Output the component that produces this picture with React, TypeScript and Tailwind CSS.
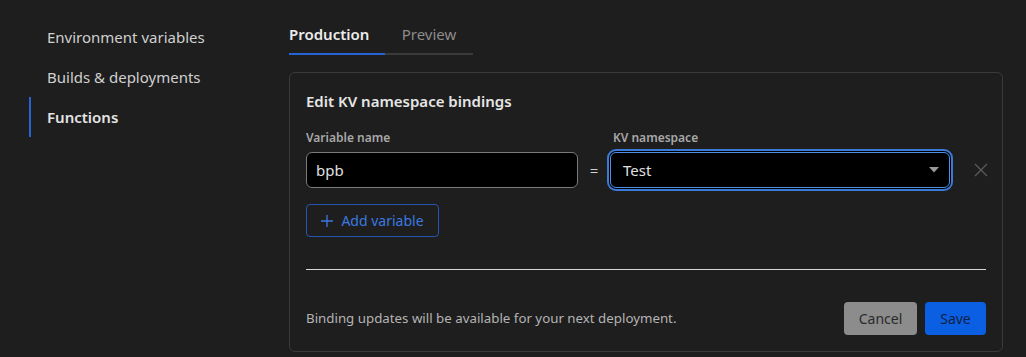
import React from 'react';

const navItems = [
  { label: 'Environment variables', active: false },
  { label: 'Builds & deployments', active: false },
  { label: 'Functions', active: true },
];

const App = () => {
  return (
    <div
      className="flex min-h-[357px] w-full bg-[#1e1e1e] text-[#d4d4d4]"
      style={{ fontFamily: '"Noto Sans", "Open Sans", sans-serif' }}
    >
      {/* Sidebar */}
      <nav className="w-[289px] shrink-0 pl-[29px] pt-[17px]">
        {navItems.map((item) => (
          <div
            key={item.label}
            className={`flex h-10 items-center border-l-2 pl-4 text-[15px] ${
              item.active ? 'border-[#2563d6] font-semibold text-[#e4e4e4]' : 'border-transparent text-[#d0d0d0]'
            }`}
          >
            {item.label}
          </div>
        ))}
      </nav>

      {/* Main */}
      <main className="w-[714px] shrink-0 pt-[22px]">
        <div className="flex">
          <button className="w-[96px] border-b-2 border-[#2563d6] pb-[7px] text-left text-[15px] leading-6 font-semibold text-[#ececec]">
            Production
          </button>
          <button className="w-[88px] border-b-2 border-[#3a3a3a] pb-[7px] text-center text-[15px] leading-6 text-[#8c8c8c]">
            Preview
          </button>
        </div>

        <section className="mt-[17px] rounded-md border border-[#3a3a3a] px-4 pt-4 pb-4">
          <h2 className="text-[15px] leading-6 font-semibold text-[#e6e6e6]">Edit KV namespace bindings</h2>

          <div className="mt-[17px] flex items-end">
            <div className="w-[272px] shrink-0">
              <div className="mb-1.5 text-[12px] leading-4 font-semibold text-[#a8a8a8]">Variable name</div>
              <input
                readOnly
                value="bpb"
                className="h-9 w-full rounded-md border border-[#7a7a7a] bg-black px-[9px] text-[15px] text-[#e0e0e0] outline-none"
              />
            </div>
            <div className="flex h-9 w-8 shrink-0 items-center justify-center text-[15px] text-[#cfcfcf]">=</div>
            <div className="w-[340px] shrink-0">
              <div className="mb-1.5 pl-[3px] text-[12px] leading-4 font-semibold text-[#a8a8a8]">KV namespace</div>
              <div className="flex h-9 items-center justify-between rounded-md border border-[#4d8fe6] bg-black pr-[10px] pl-3 shadow-[0_0_0_1px_#000,0_0_0_3px_#3a7ad8]">
                <span className="text-[15px] text-[#e0e0e0]">Test</span>
                <svg width="10" height="6" viewBox="0 0 10 6">
                  <path d="M0 0 L10 0 L5 5.5 Z" fill="#9a9a9a" />
                </svg>
              </div>
            </div>
            <button className="ml-6 flex h-9 w-[14px] shrink-0 items-center justify-center">
              <svg width="14" height="14" viewBox="0 0 14 14">
                <path d="M1 1 L13 13 M13 1 L1 13" stroke="#5c5c5c" strokeWidth="1.2" />
              </svg>
            </button>
          </div>

          <button className="mt-4 flex h-[33px] w-[133px] items-center justify-center gap-2 rounded-[4px] border border-[#2557b0] text-[14px] text-[#3a7ae0]">
            <svg width="12" height="12" viewBox="0 0 12 12">
              <path d="M6 0 V12 M0 6 H12" stroke="#3a7ae0" strokeWidth="1.3" />
            </svg>
            Add variable
          </button>

          <hr className="mt-8 border-0 border-t border-[#d6d6d6]" />

          <div className="mt-8 flex items-center justify-between">
            <p className="text-[13.3px] text-[#b4b4b4]">Binding updates will be available for your next deployment.</p>
            <div className="flex gap-2">
              <button className="h-[33px] w-[73px] rounded-[4px] bg-[#8c8c8c] text-[14px] text-[#2a2a2a]">Cancel</button>
              <button className="h-[33px] w-[61px] rounded-[4px] bg-[#0a5fe3] text-[14px] text-[#0f1f45]">Save</button>
            </div>
          </div>
        </section>
      </main>
    </div>
  );
};

export default App;
